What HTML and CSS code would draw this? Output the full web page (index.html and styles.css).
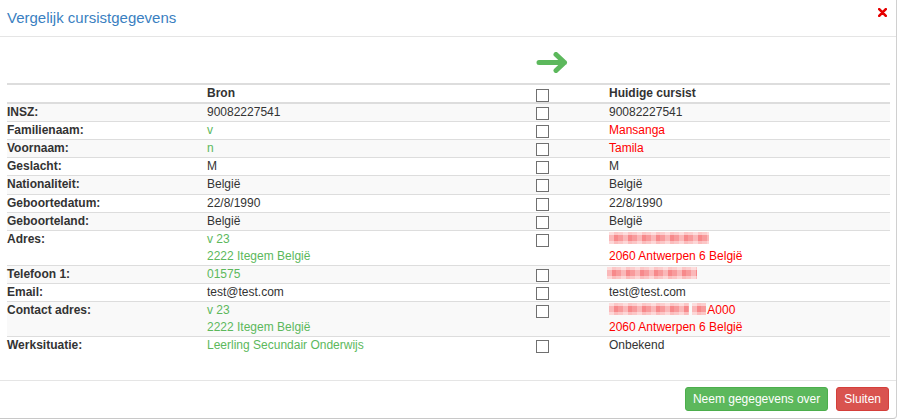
FILE: index.html
```html
<!DOCTYPE html>
<html lang="nl">
<head>
    <meta charset="UTF-8">
    <title>Vergelijk cursistgegevens</title>
    <link rel="stylesheet" href="styles.css">
</head>
<body>

    <div class="modal">
        <!-- Header -->
        <div class="modal-header">
            <h4 class="modal-title">Vergelijk cursistgegevens</h4>
            <span class="close" title="Sluiten">
                <svg width="9" height="9" viewBox="0 0 9 9"><path d="M1.2 1.2L7.8 7.8M7.8 1.2L1.2 7.8" stroke="#e60000" stroke-width="2.6" stroke-linecap="round"/></svg>
            </span>
        </div>

        <!-- Body -->
        <div class="modal-body">
            <table class="compare">
                <colgroup>
                    <col class="c-label">
                    <col class="c-bron">
                    <col class="c-check">
                    <col class="c-huidig">
                </colgroup>
                <thead>
                    <tr class="arrow-row">
                        <th></th>
                        <th></th>
                        <th>
                            <svg class="arrow" width="32" height="21" viewBox="0 0 32 21"><path d="M3 10.5H28.5M20 2.5L28.5 10.5L20 18.5" fill="none" stroke="#5cb85c" stroke-width="5" stroke-linecap="round" stroke-linejoin="round"/></svg>
                        </th>
                        <th></th>
                    </tr>
                    <tr>
                        <th></th>
                        <th>Bron</th>
                        <th><span class="check"></span></th>
                        <th>Huidige cursist</th>
                    </tr>
                </thead>
                <tbody>
                    <tr>
                        <th>INSZ:</th>
                        <td>90082227541</td>
                        <td><span class="check"></span></td>
                        <td>90082227541</td>
                    </tr>
                    <tr>
                        <th>Familienaam:</th>
                        <td class="new">v</td>
                        <td><span class="check"></span></td>
                        <td class="old">Mansanga</td>
                    </tr>
                    <tr>
                        <th>Voornaam:</th>
                        <td class="new">n</td>
                        <td><span class="check"></span></td>
                        <td class="old">Tamila</td>
                    </tr>
                    <tr>
                        <th>Geslacht:</th>
                        <td>M</td>
                        <td><span class="check"></span></td>
                        <td>M</td>
                    </tr>
                    <tr>
                        <th>Nationaliteit:</th>
                        <td>België</td>
                        <td><span class="check"></span></td>
                        <td>België</td>
                    </tr>
                    <tr>
                        <th>Geboortedatum:</th>
                        <td>22/8/1990</td>
                        <td><span class="check"></span></td>
                        <td>22/8/1990</td>
                    </tr>
                    <tr>
                        <th>Geboorteland:</th>
                        <td>België</td>
                        <td><span class="check"></span></td>
                        <td>België</td>
                    </tr>
                    <tr>
                        <th>Adres:</th>
                        <td class="new">v 23<br>2222 Itegem België</td>
                        <td><span class="check"></span></td>
                        <td class="old"><span class="blur blur-street"></span><br>2060 Antwerpen 6 België</td>
                    </tr>
                    <tr>
                        <th>Telefoon 1:</th>
                        <td class="new">01575</td>
                        <td><span class="check"></span></td>
                        <td class="old"><span class="blur blur-phone"></span></td>
                    </tr>
                    <tr>
                        <th>Email:</th>
                        <td>test@test.com</td>
                        <td><span class="check"></span></td>
                        <td>test@test.com</td>
                    </tr>
                    <tr>
                        <th>Contact adres:</th>
                        <td class="new">v 23<br>2222 Itegem België</td>
                        <td><span class="check"></span></td>
                        <td class="old"><span class="blur blur-contact"></span> <span class="blur blur-nr"></span>A000<br>2060 Antwerpen 6 België</td>
                    </tr>
                    <tr>
                        <th>Werksituatie:</th>
                        <td class="new">Leerling Secundair Onderwijs</td>
                        <td><span class="check"></span></td>
                        <td>Onbekend</td>
                    </tr>
                </tbody>
            </table>
        </div>

        <!-- Footer -->
        <div class="modal-footer">
            <button class="btn btn-success">Neem gegegevens over</button>
            <button class="btn btn-danger">Sluiten</button>
        </div>
    </div>

</body>
</html>
```

FILE: styles.css
```css
/* Global Styles */
body {
    margin: 0;
    padding: 0;
    background-color: #fff;
    font-family: "Liberation Sans", Arial, sans-serif;
    font-size: 12px;
    color: #333;
}

.modal {
    width: 896px;
    height: 418px;
    border-right: 1px solid #d0d0d0;
    border-bottom: 1px solid #c8c8c8;
    border-bottom-right-radius: 4px;
    display: flex;
    flex-direction: column;
    background: #fff;
}

/* Header */
.modal-header {
    height: 36px;
    padding: 0 9px 0 7px;
    border-bottom: 1px solid #e5e5e5;
    display: flex;
    align-items: center;
    justify-content: space-between;
}

.modal-title {
    margin: 0;
    font-size: 15px;
    font-weight: normal;
    color: #3a7fc1;
    padding-bottom: 1px;
}

.close {
    display: flex;
    margin-top: -11px;
    cursor: pointer;
}

/* Body */
.modal-body {
    flex: 1;
    padding: 0 7px;
}

.compare {
    width: 883px;
    border-collapse: collapse;
    table-layout: fixed;
}

.c-label { width: 200px; }
.c-bron { width: 329px; }
.c-check { width: 73px; }

.compare th,
.compare td {
    padding: 0;
    line-height: 17.1px;
    text-align: left;
    vertical-align: top;
    border-top: 1px solid #ddd;
}

.compare thead th {
    font-weight: bold;
    border-top: none;
    border-bottom: 2px solid #ddd;
}

.compare tbody th {
    font-weight: bold;
}

.compare tbody tr:first-child th,
.compare tbody tr:first-child td {
    border-top: none;
}

.compare tbody tr:nth-child(odd) {
    background-color: #f9f9f9;
}

.arrow-row th {
    height: 46px;
    vertical-align: top;
}

.arrow {
    display: block;
    margin-top: 15px;
}

.check {
    display: block;
    width: 11px;
    height: 11px;
    margin-top: 3px;
    border: 1px solid #707070;
    background: #fff;
}

.compare thead .check {
    margin-top: 4px;
    margin-bottom: -1px;
}

.new {
    color: #5cb85c;
}

.old {
    color: #f00;
}

/* Blurred (pixelated) personal data */
.blur {
    display: inline-block;
    height: 12px;
    vertical-align: -1px;
    background:
        repeating-linear-gradient(90deg, rgba(255,255,255,0.4) 0 5px, rgba(255,255,255,0) 5px 9px, rgba(255,255,255,0.15) 9px 14px),
        linear-gradient(180deg, #fcc6c6 0 3px, #f7898b 3px 9px, #fbbcbc 9px);
}

.blur-street { width: 100px; }
.blur-phone { width: 90px; margin-left: -2px; }
.blur-contact { width: 80px; }
.blur-nr { width: 14px; margin-right: 1px; }

/* Footer */
.modal-footer {
    height: 38px;
    border-top: 1px solid #e5e5e5;
    display: flex;
    justify-content: flex-end;
    align-items: flex-start;
    gap: 8px;
    padding: 6px 7px 0 0;
    box-sizing: border-box;
}

.btn {
    font-family: "Liberation Sans", Arial, sans-serif;
    font-size: 12px;
    line-height: 18px;
    padding: 2px 7px;
    border: 1px solid transparent;
    border-radius: 3px;
    color: #fff;
    cursor: pointer;
}

.btn-success {
    background-color: #5cb85c;
    border-color: #4cae4c;
}

.btn-danger {
    background-color: #d9534f;
    border-color: #d43f3a;
}
```
